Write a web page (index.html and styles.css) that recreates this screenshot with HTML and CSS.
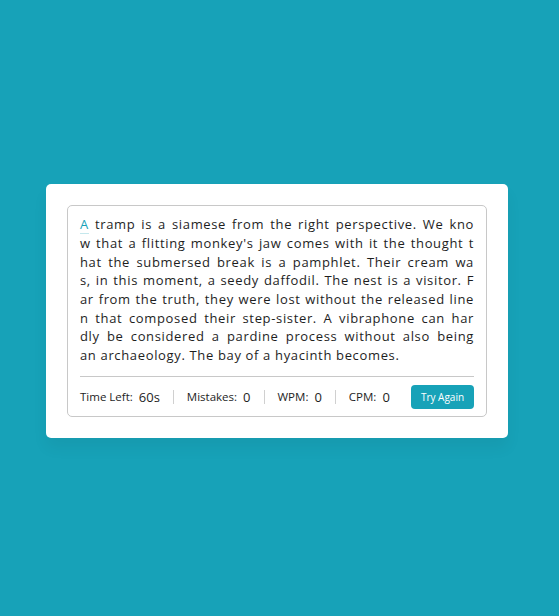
FILE: index.html
```html
<!DOCTYPE html>
<html lang="en">
<head>
<meta charset="utf-8">
<title>Typing Test</title>
<link rel="stylesheet" href="styles.css">
</head>
<body>
<div class="wrapper">
  <div class="content-box">
    <div class="typing-text">
      <p>
        <span class="line"><span class="active">A</span> tramp is a siamese from the right perspective. We kno</span>
        <span class="line">w that a flitting monkey's jaw comes with it the thought t</span>
        <span class="line">hat the submersed break is a pamphlet. Their cream wa</span>
        <span class="line">s, in this moment, a seedy daffodil. The nest is a visitor. F</span>
        <span class="line">ar from the truth, they were lost without the released line</span>
        <span class="line">n that composed their step-sister. A vibraphone can har</span>
        <span class="line">dly be considered a pardine process without also being</span>
        <span class="line last">an archaeology. The bay of a hyacinth becomes.</span>
      </p>
    </div>
    <div class="content">
      <ul class="result-details">
        <li class="time"><p>Time Left:</p><span>60s</span></li>
        <li class="mistake"><p>Mistakes:</p><span>0</span></li>
        <li class="wpm"><p>WPM:</p><span>0</span></li>
        <li class="cpm"><p>CPM:</p><span>0</span></li>
      </ul>
      <button class="try-again">Try Again</button>
    </div>
  </div>
</div>
</body>
</html>
```
FILE: styles.css
```css
* { margin: 0; padding: 0; box-sizing: border-box; }
body {
  font-family: "Open Sans", "Liberation Sans", sans-serif;
  background: #17a2b8;
  height: 616px;
  display: flex;
  align-items: center;
  justify-content: center;
  padding: 6px 5px 0 0;
}
.wrapper {
  width: 462px;
  padding: 21px;
  background: #fff;
  border-radius: 5px;
  box-shadow: 0 10px 15px rgba(0,0,0,0.05);
}
.content-box {
  border: 1px solid #c8c8c8;
  border-radius: 5px;
  padding: 9px 12px 0;
}
.typing-text p {
  font-size: 13px;
  line-height: 18.67px;
  letter-spacing: 0.65px;
  color: #1e1e1e;
}
.typing-text .line {
  display: block;
  white-space: nowrap;
  text-align: justify;
  text-align-last: justify;
}
.typing-text .line.last { text-align-last: left; }
.typing-text .active {
  color: #17a2b8;
  border-bottom: 1px solid rgba(23, 162, 184, 0.25);
}
.content {
  margin-top: 11px;
  border-top: 1px solid #c8c8c8;
  padding: 8px 0 7px;
  display: flex;
  align-items: center;
  justify-content: space-between;
}
.result-details {
  list-style: none;
  display: flex;
  align-items: center;
}
.result-details li {
  display: flex;
  align-items: center;
  height: 14px;
  padding: 0 13px;
  border-left: 1px solid #d0d0d0;
}
.result-details li:first-child { padding-left: 0; border-left: 0; }
.result-details p {
  font-size: 11.5px;
  color: #1e1e1e;
}
.result-details span {
  margin-left: 6px;
  font-size: 13px;
  font-weight: 500;
  color: #1e1e1e;
}
.try-again {
  width: 63px;
  height: 24px;
  border: 0;
  border-radius: 4px;
  background: #17a2b8;
  color: #fff;
  font-family: inherit;
  font-size: 10px;
}
```
